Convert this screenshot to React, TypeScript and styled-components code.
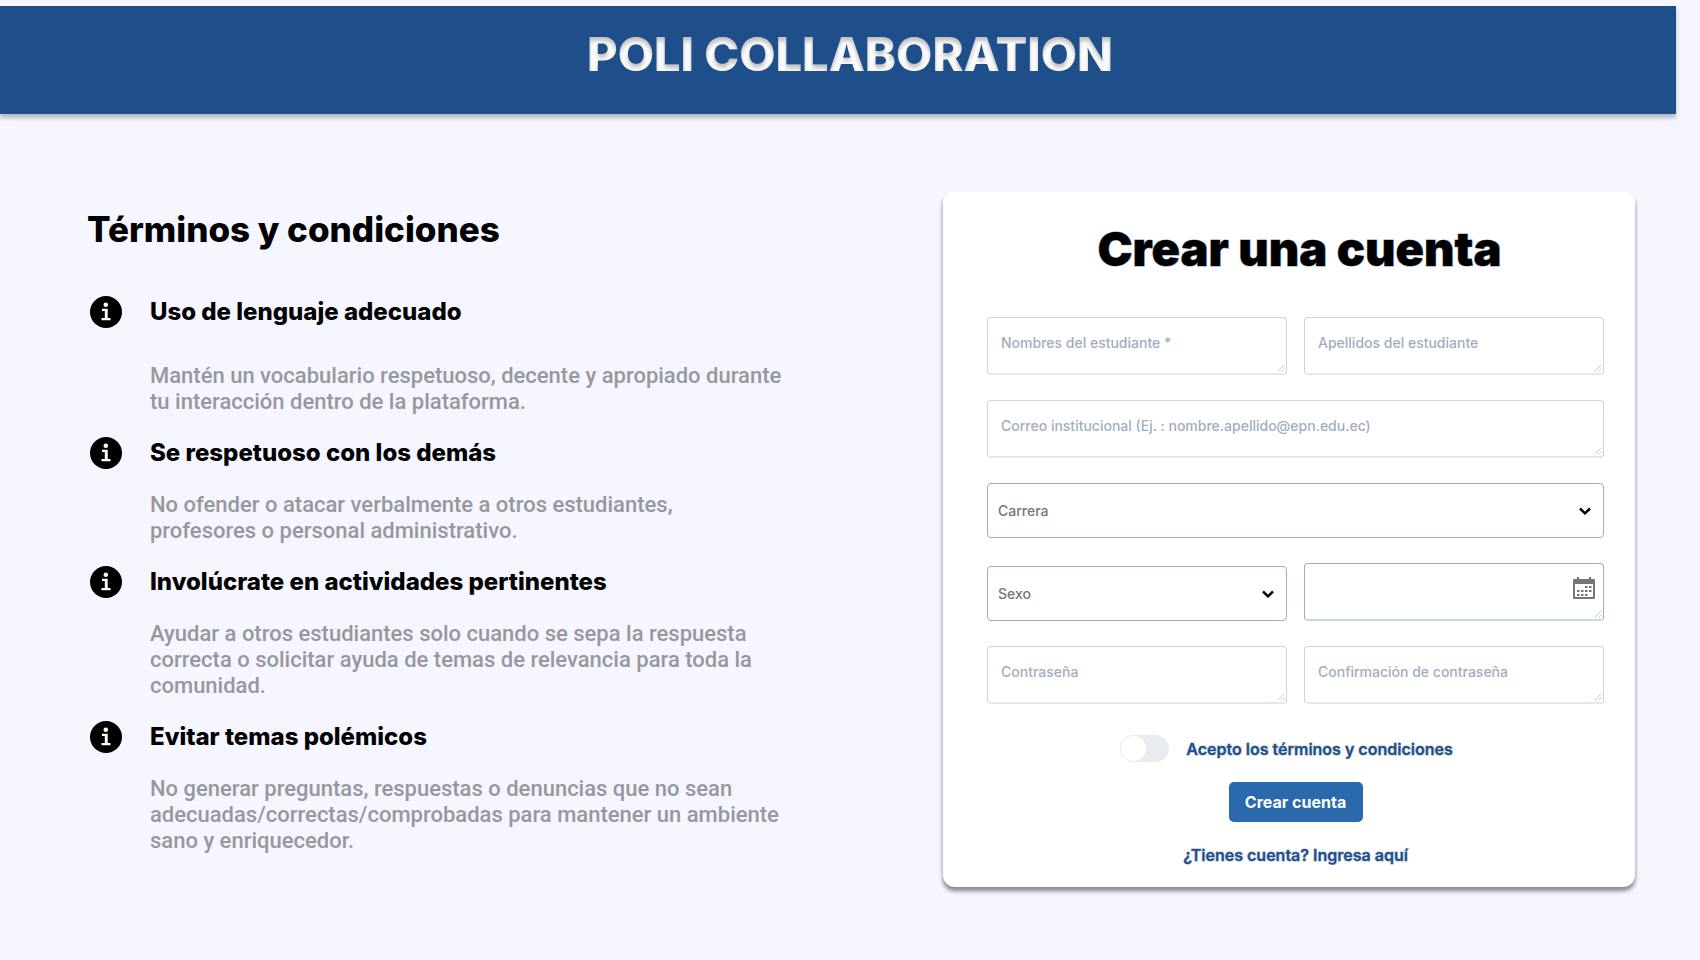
import React from "react";
import styled, { createGlobalStyle } from "styled-components";

const GlobalStyle = createGlobalStyle`
  *, *::before, *::after { box-sizing: border-box; }
  body {
    margin: 0;
    background: #f5f6ff;
    color: #000;
    font-family: Inter, "Liberation Sans", sans-serif;
  }
  h1, h2, h3, p, ul { margin: 0; padding: 0; }
  ul { list-style: none; }
`;

const Page = styled.div`
  min-height: 100vh;
  padding-top: 6px;
`;

const Header = styled.header`
  display: flex;
  justify-content: center;
  height: 108px;
  margin-right: 24px;
  padding: 20px 0 0 24px;
  background: #1f4f8b;
  box-shadow: 0 4px 4px rgba(0, 0, 0, 0.25);
`;

const Brand = styled.h1`
  color: #fff;
  font-size: 47px;
  font-weight: 800;
  line-height: 56px;
  filter: url(#inner-shadow);
`;

const FilterDefs = styled.svg`
  position: absolute;
`;

const Main = styled.main`
  display: grid;
  grid-template-columns: 856fr 692fr;
  align-items: start;
  padding: 77px 65px 64px 87px;
`;

const Terms = styled.section`
  padding-top: 17px;
`;

const TermsTitle = styled.h2`
  font-size: 35px;
  font-weight: 800;
  line-height: 42px;
`;

const TermsList = styled.ul`
  display: grid;
  gap: 22px;
  margin: 46px 0 0 3px;
`;

const Term = styled.li<{ $roomy?: boolean }>`
  display: grid;
  grid-template-columns: 32px minmax(0, 640px);
  column-gap: 28px;
  row-gap: ${({ $roomy }) => ($roomy ? 35 : 23)}px;
`;

const TermTitle = styled.h3`
  font-size: 24px;
  font-weight: 800;
  line-height: 32px;
`;

const TermText = styled.p`
  grid-column: 2;
  color: #97989d;
  font-family: Roboto, "Liberation Sans", sans-serif;
  font-size: 22px;
  font-weight: 500;
  line-height: 26px;
  white-space: pre-line;
`;

const Card = styled.form`
  display: flex;
  flex-direction: column;
  align-items: center;
  padding: 30px 31px 22px 44px;
  border-radius: 12px;
  background: #fff;
  box-shadow: 0 4px 4px rgba(0, 0, 0, 0.25), 0 4px 4px rgba(0, 0, 0, 0.25);
`;

const CardTitle = styled.h2`
  padding-left: 8px;
  font-size: 47px;
  font-weight: 900;
  line-height: 56px;
  paint-order: stroke;
  -webkit-text-stroke: 1px #829ab4;
`;

const Fields = styled.div`
  display: grid;
  grid-template-columns: 1fr 1fr;
  align-items: end;
  gap: 25px 17px;
  width: 100%;
  margin: 40px 0 31px;
`;

const Box = styled.div<{ $wide?: boolean; $strong?: boolean }>`
  position: relative;
  display: flex;
  grid-column: ${({ $wide }) => ($wide ? "1 / -1" : "auto")};
  height: 58px;
  border: 1px solid ${({ $strong }) => ($strong ? "#a0aec4" : "#cbd5e0")};
  border-bottom: 2px solid ${({ $strong }) => ($strong ? "#cbd5e3" : "#e2e8ee")};
  border-radius: 4px;
`;

const TextInput = styled.input`
  flex: 1;
  min-width: 0;
  padding: 0 13px 6px;
  border: 0;
  outline: 0;
  background: none;
  color: #2d3748;
  font: 500 14px Inter, "Liberation Sans", sans-serif;
  &::placeholder { color: #a0aec0; opacity: 1; }
`;

const Grip = styled.svg`
  position: absolute;
  right: 1px;
  bottom: 1px;
  width: 8px;
  height: 8px;
  fill: none;
  stroke: #c5ccd8;
`;

const CalendarButton = styled.button`
  align-self: flex-start;
  margin: 13px 8px 0 0;
  padding: 0;
  border: 0;
  background: none;
  color: #757575;
  line-height: 0;
`;

const SelectBox = styled.div<{ $wide?: boolean }>`
  display: grid;
  align-items: center;
  grid-column: ${({ $wide }) => ($wide ? "1 / -1" : "auto")};
  height: 55px;
  & > * { grid-area: 1 / 1; }
  & > svg {
    justify-self: end;
    margin-right: 12px;
    pointer-events: none;
  }
`;

const Select = styled.select`
  appearance: none;
  width: 100%;
  height: 100%;
  padding: 0 40px 0 10px;
  border: 1px solid #a0aec4;
  border-radius: 4px;
  background: #fff;
  color: #757575;
  font: 500 14px Inter, "Liberation Sans", sans-serif;
`;

const Accept = styled.label`
  display: flex;
  align-items: center;
  gap: 17px;
  padding-right: 18px;
  margin-bottom: 20px;
`;

const Switch = styled.input`
  appearance: none;
  width: 49px;
  height: 27px;
  margin: 0;
  padding: 1px;
  border-radius: 14px;
  background: #e8ecf1;
  &::before {
    content: "";
    display: block;
    width: 25px;
    height: 25px;
    border-radius: 50%;
    background: #fff;
  }
  &:checked { background: #2a69ac; }
  &:checked::before { margin-left: 22px; }
`;

const BlueText = styled.span`
  color: #1f4f8b;
  font-size: 16px;
  font-weight: 600;
  line-height: 20px;
  paint-order: stroke;
  -webkit-text-stroke: 1px #a3b4cc;
`;

const Submit = styled.button`
  width: 134px;
  height: 40px;
  margin-bottom: 23px;
  padding: 0;
  border: 0;
  border-radius: 5px;
  background: #2a69ac;
  color: #fff;
  font: 700 16px Inter, "Liberation Sans", sans-serif;
`;

const LoginLink = styled(BlueText).attrs({ as: "a" })<{ href: string }>`
  text-decoration: none;
`;

const InfoIcon = () => (
  <svg width="32" height="32" viewBox="0 0 32 32" aria-hidden="true">
    <circle cx="16" cy="16" r="16" fill="#000" />
    <circle cx="15.800" cy="8.800" r="2.300" fill="#fff" />
    <path d="M12 12.700h5.700v9.300H20.500v2.300H11.500V22h3.300v-7H12z" fill="#fff" />
  </svg>
);

const Chevron = () => (
  <svg width="14" height="14" viewBox="0 0 14 14" aria-hidden="true">
    <path d="M2 4.500 7 9.300 12 4.500" fill="none" stroke="#000" strokeWidth="2.500" />
  </svg>
);

const days = [
  [12, 9], [16, 9],
  [4, 13], [8, 13], [12, 13], [16, 13],
  [4, 17], [8, 17], [12, 17],
];

const CalendarIcon = () => (
  <svg width="22" height="22" viewBox="0 0 22 22" fill="currentColor" aria-hidden="true">
    <path d="M4 0h2v2h10V0h2v2h3a1 1 0 0 1 1 1v18a1 1 0 0 1-1 1H1a1 1 0 0 1-1-1V3a1 1 0 0 1 1-1h3zM2 7v13h18V7z" />
    {days.map(([x, y]) => (
      <rect key={`${x}-${y}`} x={x} y={y} width="2.500" height="2" />
    ))}
  </svg>
);

type FieldProps = {
  label: string;
  placeholder?: string;
  type?: string;
  wide?: boolean;
  strong?: boolean;
  children?: React.ReactNode;
};

const Field = ({ label, placeholder, type = "text", wide, strong, children }: FieldProps) => (
  <Box $wide={wide} $strong={strong}>
    <TextInput type={type} aria-label={label} placeholder={placeholder} />
    {children}
    <Grip viewBox="0 0 8 8" aria-hidden="true">
      <path d="M0.500 7.500 7.500 0.500M4.500 7.500 7.500 4.500" />
    </Grip>
  </Box>
);

const SelectField = ({ label, wide }: { label: string; wide?: boolean }) => (
  <SelectBox $wide={wide}>
    <Select aria-label={label} defaultValue="">
      <option value="">{label}</option>
    </Select>
    <Chevron />
  </SelectBox>
);

const terms = [
  {
    title: "Uso de lenguaje adecuado",
    text: "Mantén un vocabulario respetuoso, decente y apropiado durante tu interacción dentro de la plataforma.",
  },
  {
    title: "Se respetuoso con los demás",
    text: "No ofender o atacar verbalmente a otros estudiantes,\nprofesores o personal administrativo.",
  },
  {
    title: "Involúcrate en actividades pertinentes",
    text: "Ayudar a otros estudiantes solo cuando se sepa la respuesta correcta o solicitar ayuda de temas de relevancia para toda la comunidad.",
  },
  {
    title: "Evitar temas polémicos",
    text: "No generar preguntas, respuestas o denuncias que no sean adecuadas/correctas/comprobadas para mantener un ambiente sano y enriquecedor.",
  },
];

export default function App() {
  return (
    <Page>
      <GlobalStyle />
      <FilterDefs width="0" height="0" aria-hidden="true">
        <filter id="inner-shadow" colorInterpolationFilters="sRGB">
          <feOffset in="SourceAlpha" dy="4" result="moved" />
          <feGaussianBlur in="moved" stdDeviation="2" result="soft" />
          <feComposite in="SourceAlpha" in2="soft" operator="out" result="edge" />
          <feColorMatrix in="edge" values="0 0 0 0 0  0 0 0 0 0  0 0 0 0 0  0 0 0 0.25 0" result="shade" />
          <feMerge>
            <feMergeNode in="SourceGraphic" />
            <feMergeNode in="shade" />
          </feMerge>
        </filter>
      </FilterDefs>
      <Header>
        <Brand>POLI COLLABORATION</Brand>
      </Header>
      <Main>
        <Terms>
          <TermsTitle>Términos y condiciones</TermsTitle>
          <TermsList>
            {terms.map((term, index) => (
              <Term key={term.title} $roomy={index === 0}>
                <InfoIcon />
                <TermTitle>{term.title}</TermTitle>
                <TermText>{term.text}</TermText>
              </Term>
            ))}
          </TermsList>
        </Terms>
        <Card onSubmit={(event) => event.preventDefault()}>
          <CardTitle>Crear una cuenta</CardTitle>
          <Fields>
            <Field label="Nombres del estudiante" placeholder="Nombres del estudiante *" />
            <Field label="Apellidos del estudiante" placeholder="Apellidos del estudiante" />
            <Field
              wide
              type="email"
              label="Correo institucional"
              placeholder="Correo institucional (Ej. : nombre.apellido@epn.edu.ec)"
            />
            <SelectField wide label="Carrera" />
            <SelectField label="Sexo" />
            <Field strong label="Fecha de nacimiento">
              <CalendarButton type="button" aria-label="Abrir calendario">
                <CalendarIcon />
              </CalendarButton>
            </Field>
            <Field type="password" label="Contraseña" placeholder="Contraseña" />
            <Field type="password" label="Confirmación de contraseña" placeholder="Confirmación de contraseña" />
          </Fields>
          <Accept>
            <Switch type="checkbox" role="switch" />
            <BlueText>Acepto los términos y condiciones</BlueText>
          </Accept>
          <Submit type="submit">Crear cuenta</Submit>
          <LoginLink href="#ingresar">¿Tienes cuenta? Ingresa aquí</LoginLink>
        </Card>
      </Main>
    </Page>
  );
}
